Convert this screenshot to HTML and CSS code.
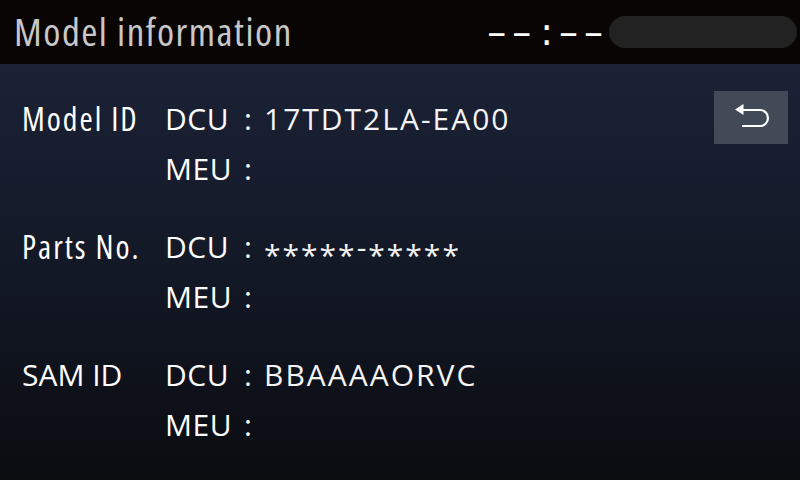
FILE: index.html
```html
<!DOCTYPE html>
<html lang="en">
<head>
<meta charset="utf-8">
<title>Model information</title>
<link rel="stylesheet" href="styles.css">
</head>
<body>
<div class="screen">
  <header class="topbar">
    <h1 class="title">Model information</h1>
    <div class="status">
      <span class="clock">––<span class="sep">:</span>––</span>
      <span class="pill"></span>
    </div>
  </header>
  <main class="content">
    <div class="info">
      <section class="group">
        <div class="label">Model ID</div>
        <div class="key">DCU</div><div class="colon">:</div><div class="value">17TDT2LA-EA00</div>
        <div class="key">MEU</div><div class="colon">:</div><div class="value"></div>
      </section>
      <section class="group">
        <div class="label">Parts No.</div>
        <div class="key">DCU</div><div class="colon">:</div><div class="value"><span class="mask">*****</span>-<span class="mask">*****</span></div>
        <div class="key">MEU</div><div class="colon">:</div><div class="value"></div>
      </section>
      <section class="group">
        <div class="label label-caps">SAM ID</div>
        <div class="key">DCU</div><div class="colon">:</div><div class="value">BBAAAAORVC</div>
        <div class="key">MEU</div><div class="colon">:</div><div class="value"></div>
      </section>
    </div>
    <button class="back" aria-label="Back">
      <svg width="74" height="53" viewBox="0 0 74 53">
        <path d="M29 19 H46 A8 8 0 0 1 46 35 H28" fill="none" stroke="#fff" stroke-width="2.2"/>
        <path d="M21 18.5 L29.5 13 L29.5 24 Z" fill="#fff"/>
      </svg>
    </button>
  </main>
</div>
</body>
</html>
```

FILE: styles.css
```css
html, body {
  margin: 0;
  padding: 0;
  background: #0a0c10;
}

.screen {
  width: 800px;
  height: 480px;
  display: flex;
  flex-direction: column;
  overflow: hidden;
  font-family: "Open Sans", "DejaVu Sans", sans-serif;
}

.topbar {
  height: 64px;
  flex: none;
  background: #080504;
  display: flex;
  align-items: center;
  justify-content: space-between;
  padding: 0 3px 0 14px;
  box-sizing: border-box;
}

.title {
  margin: 0;
  font-size: 39px;
  font-weight: 400;
  font-stretch: 75%;
  color: #c8c8c8;
  letter-spacing: 1.5px;
  line-height: 1;
  padding-bottom: 3px;
}

.status {
  display: flex;
  align-items: center;
  gap: 0;
}

.clock {
  font-family: "DejaVu Sans", sans-serif;
  font-size: 38px;
  color: #fff;
  letter-spacing: 6px;
  line-height: 1;
}

.clock .sep {
  margin-left: 3px;
}

.pill {
  width: 188px;
  height: 32px;
  border-radius: 16px;
  background: #222222;
}

.content {
  flex: 1;
  background: linear-gradient(180deg, #1b2236 0%, #131826 50%, #0a0c10 100%);
  display: flex;
  justify-content: space-between;
  align-items: flex-start;
  padding: 30px 12px 0 22px;
}

.info {
  display: flex;
  flex-direction: column;
  gap: 28px;
}

.group {
  display: grid;
  grid-template-columns: 143px 79px 20px auto;
  grid-auto-rows: 50px;
  font-size: 30px;
  line-height: 50px;
  color: #fff;
}

.label {
  grid-row: 1 / span 2;
  font-size: 32px;
  font-stretch: 75%;
  letter-spacing: 2px;
}

.label-caps {
  font-size: 30px;
  font-stretch: 100%;
  letter-spacing: 0;
}

.key {
  letter-spacing: 0.5px;
}

.value {
  color: #f4f4f4;
  letter-spacing: 2px;
}

.mask {
  vertical-align: -8px;
}

.back {
  margin: -3px 0 0 0;
  padding: 0;
  border: none;
  width: 74px;
  height: 53px;
  background: #434a57;
  display: block;
}

.back svg {
  display: block;
}
```
